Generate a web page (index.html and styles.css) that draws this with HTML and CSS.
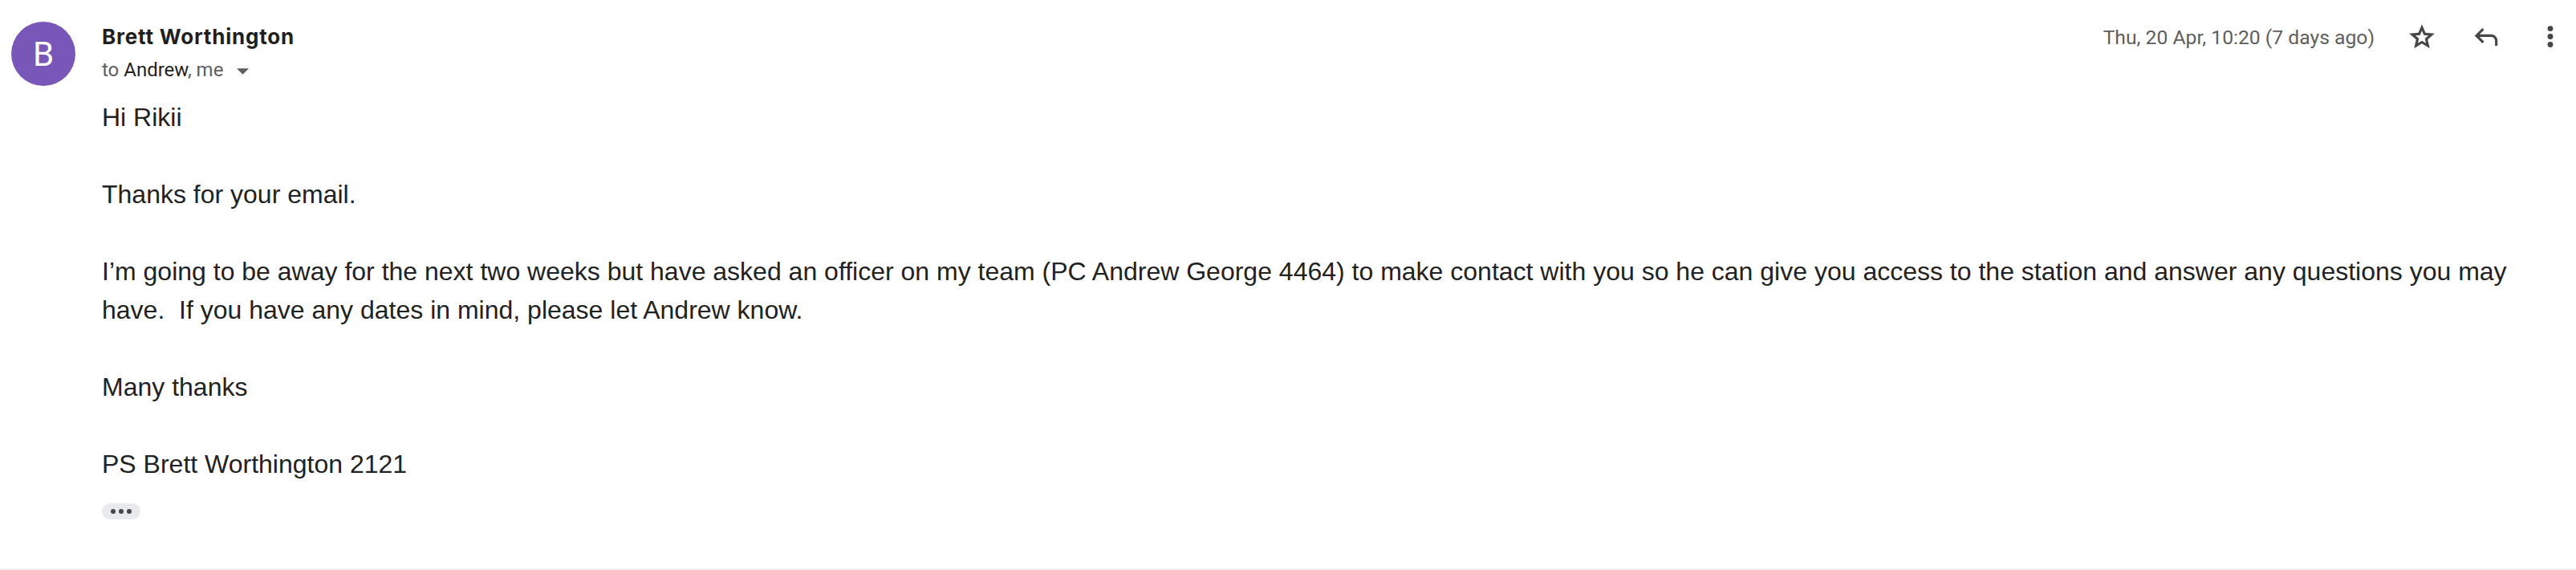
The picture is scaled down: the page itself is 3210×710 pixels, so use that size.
FILE: index.html
```html
<!DOCTYPE html>
<html lang="en">
<head>
<meta charset="utf-8">
<title>Message</title>
<link rel="stylesheet" href="styles.css">
</head>
<body>
<div class="message">
  <div class="avatar">B</div>
  <div class="main">
    <div class="header">
      <div class="from">
        <div class="name">Brett Worthington</div>
        <div class="to">to <span class="dark">Andrew</span>, me<svg class="caret" viewBox="0 0 10 5" width="15" height="8"><path d="M0 0l5 5 5-5z" fill="#5e5e5e"/></svg></div>
      </div>
      <div class="meta">
        <span class="date">Thu, 20 Apr, 10:20 (7 days ago)</span>
        <div class="icons">
          <svg class="icon" viewBox="0 -960 960 960" width="38" height="38"><path fill="#444746" d="m354-287 126-76 126 77-33-144 111-96-146-13-58-136-58 135-146 13 111 97-33 143ZM233-120l65-281L80-590l288-25 112-265 112 265 288 25-218 189 65 281-247-149-247 149Zm247-350Z"/></svg>
          <svg class="icon" viewBox="0 -960 960 960" width="38" height="38"><path fill="#444746" d="M760-200v-160q0-50-35-85t-85-35H273l144 144-57 56-240-240 240-240 57 56-144 144h367q83 0 141.5 58.5T840-360v160h-80Z"/></svg>
          <svg class="icon" viewBox="0 0 40 40" width="38" height="38"><circle cx="20" cy="9" r="3.6" fill="#444746"/><circle cx="20" cy="19.5" r="3.6" fill="#444746"/><circle cx="20" cy="30" r="3.6" fill="#444746"/></svg>
        </div>
      </div>
    </div>
    <div class="body">
      Hi Rikii<br><br>
      Thanks for your email.<br><br>
      I’m going to be away for the next two weeks but have asked an officer on my team (PC Andrew George 4464) to make contact with you so he can give you access to the station and answer any questions you may have.&nbsp; If you have any dates in mind, please let Andrew know.<br><br>
      Many thanks<br><br>
      PS Brett Worthington 2121
    </div>
    <div class="pill"><span class="dot"></span><span class="dot"></span><span class="dot"></span></div>
  </div>
</div>
</body>
</html>
```

FILE: styles.css
```css
html, body {
  margin: 0;
  padding: 0;
  background: #ffffff;
}

.message {
  display: flex;
  align-items: flex-start;
  box-sizing: border-box;
  height: 710px;
  padding: 27px 13px 0 14px;
  border-bottom: 2px solid #f1f1f1;
}

.avatar {
  flex: 0 0 80px;
  width: 80px;
  height: 80px;
  border-radius: 50%;
  background: #7957b9;
  color: #ffffff;
  font-family: Roboto, "Liberation Sans", sans-serif;
  font-size: 42px;
  display: flex;
  align-items: center;
  justify-content: center;
}

.main {
  flex: 1;
  margin-left: 33px;
  padding-top: 3px;
  display: flex;
  flex-direction: column;
  align-items: flex-start;
}

.header {
  align-self: stretch;
  display: flex;
  justify-content: space-between;
  align-items: flex-start;
}

.name {
  font-family: Inter, Roboto, "Liberation Sans", sans-serif;
  font-weight: 700;
  font-size: 26px;
  letter-spacing: 0.8px;
  line-height: 32px;
  color: #1f1f1f;
}

.to {
  margin-top: 5px;
  font-family: Roboto, "Liberation Sans", sans-serif;
  font-size: 24px;
  line-height: 40px;
  height: 40px;
  color: #5e5e5e;
  white-space: nowrap;
}

.to .dark {
  color: #1f1f1f;
}

.caret {
  display: inline-block;
  vertical-align: middle;
  margin-left: 17px;
}

.meta {
  display: flex;
  align-items: center;
  height: 32px;
}

.date {
  font-family: Roboto, "Liberation Sans", sans-serif;
  font-size: 24.7px;
  color: #5e5e5e;
  margin-right: 40px;
}

.icons {
  display: flex;
  align-items: center;
  gap: 42px;
}

.icon {
  display: block;
}

.body {
  margin-top: 15px;
  padding-right: 40px;
  font-family: Arial, "Liberation Sans", sans-serif;
  font-size: 32px;
  line-height: 48px;
  color: #222222;
}

.pill {
  margin-top: 25px;
  width: 48px;
  height: 20px;
  border-radius: 10px;
  background: #e8eaed;
  display: flex;
  align-items: center;
  justify-content: center;
  gap: 4px;
}

.dot {
  width: 6px;
  height: 6px;
  border-radius: 50%;
  background: #444746;
}
```
